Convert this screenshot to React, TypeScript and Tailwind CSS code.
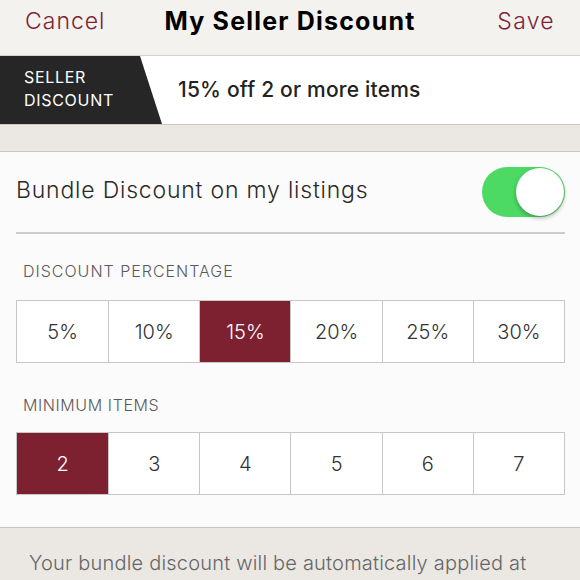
import React from 'react';

const percents = ['5%', '10%', '15%', '20%', '25%', '30%'];
const minItems = ['2', '3', '4', '5', '6', '7'];

interface OptionRowProps {
  options: string[];
  selected: string;
}

const OptionRow: React.FC<OptionRowProps> = ({ options, selected }) => (
  <div className="mx-[16px] mr-[15px] grid grid-cols-6 h-[63px] border border-[#c9c7c6]">
    {options.map((opt, i) => {
      const isActive = opt === selected;
      return (
        <div
          key={opt}
          className={`flex items-center justify-center text-[20px] font-light ${i > 0 ? 'border-l border-[#c9c7c6]' : ''} ${
            isActive ? 'bg-[#7d2130] text-white' : 'bg-white text-[#333]'
          }`}
        >
          {opt}
        </div>
      );
    })}
  </div>
);

export default function App() {
  return (
    <div className="w-[580px] h-[580px] overflow-hidden bg-[#ebe8e4] font-['Inter',sans-serif]">
      {/* nav bar */}
      <div className="h-[56px] grid grid-cols-[1fr_auto_1fr] items-center px-[25px] bg-[#f4f2ef] border-b border-[#d6d3ce]">
        <span className="justify-self-start text-[23px] font-light tracking-[1px] text-[#7b2433] pb-[12px]">Cancel</span>
        <span className="text-[25px] font-bold tracking-[1.2px] text-black pb-[12px]">My Seller Discount</span>
        <span className="justify-self-end text-[23px] font-light tracking-[1.3px] text-[#7b2433] pb-[12px]">Save</span>
      </div>

      {/* current discount banner */}
      <div className="h-[69px] flex items-stretch bg-white border-b border-[#c9c6c1]">
        <div className="w-[162px] bg-[#262626] text-white [clip-path:polygon(0_0,140px_0,162px_100%,0_100%)] flex flex-col justify-center pl-[24px] text-[16px] tracking-[0.7px] leading-[23px] pb-[2px]">
          <span>SELLER</span>
          <span>DISCOUNT</span>
        </div>
        <div className="flex items-center pl-[16px] text-[21px] font-medium tracking-[0.2px] text-[#222]">
          15% off 2 or more items
        </div>
      </div>

      <div className="h-[26px]" />

      {/* settings */}
      <div className="bg-[#fcfbfb] border-t border-b border-[#c9c6c1] h-[377px]">
        <div className="h-[80px] flex items-center justify-between pl-[16px] pr-[15px]">
          <span className="text-[23px] font-light tracking-[0.8px] text-[#2a2a2a] pb-[4px]">Bundle Discount on my listings</span>
          <div className="w-[83px] h-[50px] rounded-full bg-[#4cd964] flex items-center justify-end pr-[1px]">
            <div className="w-[48px] h-[48px] rounded-full bg-white shadow-[0_2px_4px_rgba(0,0,0,0.3)]" />
          </div>
        </div>
        <div className="mx-[16px] mr-[15px] h-[2px] bg-[#cfcdcc]" />

        <div className="h-[66px] flex items-center pl-[23px] pt-[18px] pb-[10px] text-[16px] font-light tracking-[1px] text-[#5a5a5a]">
          DISCOUNT PERCENTAGE
        </div>
        <OptionRow options={percents} selected="15%" />

        <div className="h-[69px] flex items-center pl-[23px] pt-[14px] text-[16px] font-light tracking-[0.6px] text-[#5a5a5a]">
          MINIMUM ITEMS
        </div>
        <OptionRow options={minItems} selected="2" />
      </div>

      <div className="pl-[29px] pt-[22px] text-[20px] font-light tracking-[0.2px] text-[#666] leading-[26px]">
        Your bundle discount will be automatically applied at
      </div>
    </div>
  );
}
